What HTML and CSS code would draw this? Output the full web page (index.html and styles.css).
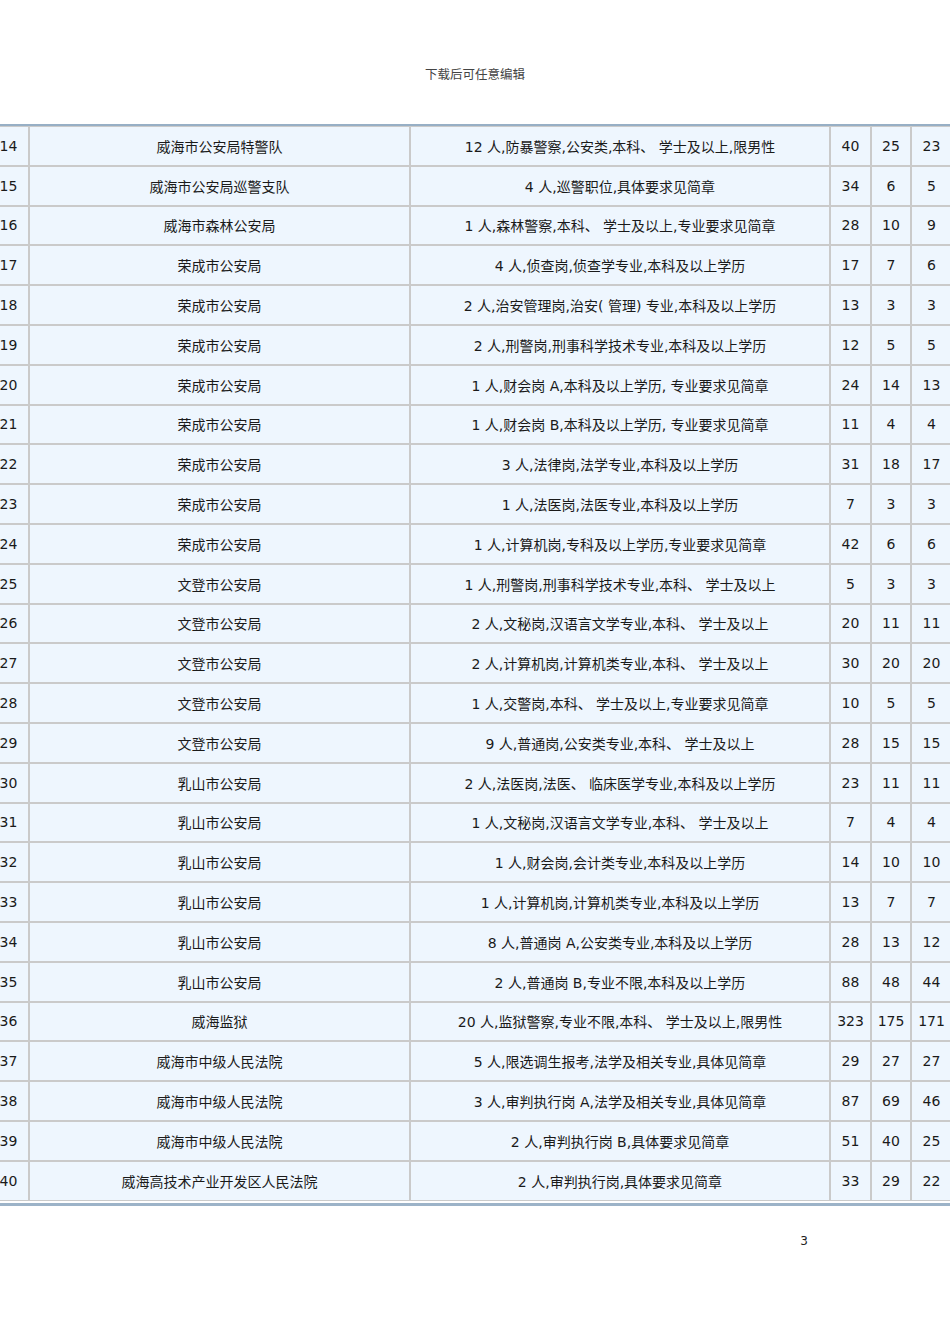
FILE: index.html
```html
<!DOCTYPE html>
<html lang="zh">
<head>
<meta charset="utf-8">
<title>下载后可任意编辑</title>
<link rel="stylesheet" href="styles.css">
</head>
<body>
<div class="page">
  <div class="header">下载后可任意编辑</div>
  <div class="table-wrap">
    <table class="grid">
      <colgroup>
        <col class="c0"><col class="c1"><col class="c2"><col class="c3"><col class="c4"><col class="c5">
      </colgroup>
      <tbody>
        <tr><td>14</td><td>威海市公安局特警队</td><td>12 人,防暴警察,公安类,本科、 学士及以上,限男性</td><td>40</td><td>25</td><td>23</td></tr>
        <tr><td>15</td><td>威海市公安局巡警支队</td><td>4 人,巡警职位,具体要求见简章</td><td>34</td><td>6</td><td>5</td></tr>
        <tr><td>16</td><td>威海市森林公安局</td><td>1 人,森林警察,本科、 学士及以上,专业要求见简章</td><td>28</td><td>10</td><td>9</td></tr>
        <tr><td>17</td><td>荣成市公安局</td><td>4 人,侦查岗,侦查学专业,本科及以上学历</td><td>17</td><td>7</td><td>6</td></tr>
        <tr><td>18</td><td>荣成市公安局</td><td>2 人,治安管理岗,治安( 管理) 专业,本科及以上学历</td><td>13</td><td>3</td><td>3</td></tr>
        <tr><td>19</td><td>荣成市公安局</td><td>2 人,刑警岗,刑事科学技术专业,本科及以上学历</td><td>12</td><td>5</td><td>5</td></tr>
        <tr><td>20</td><td>荣成市公安局</td><td>1 人,财会岗 A,本科及以上学历, 专业要求见简章</td><td>24</td><td>14</td><td>13</td></tr>
        <tr><td>21</td><td>荣成市公安局</td><td>1 人,财会岗 B,本科及以上学历, 专业要求见简章</td><td>11</td><td>4</td><td>4</td></tr>
        <tr><td>22</td><td>荣成市公安局</td><td>3 人,法律岗,法学专业,本科及以上学历</td><td>31</td><td>18</td><td>17</td></tr>
        <tr><td>23</td><td>荣成市公安局</td><td>1 人,法医岗,法医专业,本科及以上学历</td><td>7</td><td>3</td><td>3</td></tr>
        <tr><td>24</td><td>荣成市公安局</td><td>1 人,计算机岗,专科及以上学历,专业要求见简章</td><td>42</td><td>6</td><td>6</td></tr>
        <tr><td>25</td><td>文登市公安局</td><td>1 人,刑警岗,刑事科学技术专业,本科、 学士及以上</td><td>5</td><td>3</td><td>3</td></tr>
        <tr><td>26</td><td>文登市公安局</td><td>2 人,文秘岗,汉语言文学专业,本科、 学士及以上</td><td>20</td><td>11</td><td>11</td></tr>
        <tr><td>27</td><td>文登市公安局</td><td>2 人,计算机岗,计算机类专业,本科、 学士及以上</td><td>30</td><td>20</td><td>20</td></tr>
        <tr><td>28</td><td>文登市公安局</td><td>1 人,交警岗,本科、 学士及以上,专业要求见简章</td><td>10</td><td>5</td><td>5</td></tr>
        <tr><td>29</td><td>文登市公安局</td><td>9 人,普通岗,公安类专业,本科、 学士及以上</td><td>28</td><td>15</td><td>15</td></tr>
        <tr><td>30</td><td>乳山市公安局</td><td>2 人,法医岗,法医、 临床医学专业,本科及以上学历</td><td>23</td><td>11</td><td>11</td></tr>
        <tr><td>31</td><td>乳山市公安局</td><td>1 人,文秘岗,汉语言文学专业,本科、 学士及以上</td><td>7</td><td>4</td><td>4</td></tr>
        <tr><td>32</td><td>乳山市公安局</td><td>1 人,财会岗,会计类专业,本科及以上学历</td><td>14</td><td>10</td><td>10</td></tr>
        <tr><td>33</td><td>乳山市公安局</td><td>1 人,计算机岗,计算机类专业,本科及以上学历</td><td>13</td><td>7</td><td>7</td></tr>
        <tr><td>34</td><td>乳山市公安局</td><td>8 人,普通岗 A,公安类专业,本科及以上学历</td><td>28</td><td>13</td><td>12</td></tr>
        <tr><td>35</td><td>乳山市公安局</td><td>2 人,普通岗 B,专业不限,本科及以上学历</td><td>88</td><td>48</td><td>44</td></tr>
        <tr><td>36</td><td>威海监狱</td><td>20 人,监狱警察,专业不限,本科、 学士及以上,限男性</td><td>323</td><td>175</td><td>171</td></tr>
        <tr><td>37</td><td>威海市中级人民法院</td><td>5 人,限选调生报考,法学及相关专业,具体见简章</td><td>29</td><td>27</td><td>27</td></tr>
        <tr><td>38</td><td>威海市中级人民法院</td><td>3 人,审判执行岗 A,法学及相关专业,具体见简章</td><td>87</td><td>69</td><td>46</td></tr>
        <tr><td>39</td><td>威海市中级人民法院</td><td>2 人,审判执行岗 B,具体要求见简章</td><td>51</td><td>40</td><td>25</td></tr>
        <tr><td>40</td><td>威海高技术产业开发区人民法院</td><td>2 人,审判执行岗,具体要求见简章</td><td>33</td><td>29</td><td>22</td></tr>
      </tbody>
    </table>
  </div>
  <div class="page-num">3</div>
</div>
</body>
</html>
```

FILE: styles.css
```css
html, body {
  margin: 0;
  padding: 0;
  background: #ffffff;
  overflow-x: hidden;
}

.page {
  width: 950px;
  padding-top: 66px;
}

.header {
  font-family: "Noto Sans CJK SC", "DejaVu Sans", sans-serif;
  font-size: 12.5px;
  line-height: 16px;
  color: #444444;
  text-align: center;
  height: 16px;
  margin-bottom: 42px;
}

.table-wrap {
  width: 950px;
  overflow: hidden;
  border-top: 2px solid #97afc5;
  border-bottom: 3px solid #9cb3c8;
  padding-top: 0;
  padding-bottom: 2px;
}

.grid {
  margin-left: -12px;
  border-collapse: separate;
  border-spacing: 0;
  table-layout: fixed;
  width: 964px;
}

.c0 { width: 41px; }
.c1 { width: 381px; }
.c2 { width: 420px; }
.c3 { width: 41px; }
.c4 { width: 40px; }
.c5 { width: 41px; }

.grid td {
  box-sizing: border-box;
  height: 39.8px;
  padding: 0 1px;
  border: 1px solid #cacaca;
  background: #eef6fe;
  text-align: center;
  vertical-align: middle;
  font-family: "DejaVu Sans", "Noto Sans CJK SC", sans-serif;
  font-size: 14px;
  color: #1a1a1a;
  white-space: nowrap;
  overflow: hidden;
}

.page-num {
  margin-top: 28px;
  font-family: "DejaVu Sans", sans-serif;
  font-size: 12px;
  line-height: 14px;
  color: #222222;
  text-align: right;
  padding-right: 142px;
}
```
